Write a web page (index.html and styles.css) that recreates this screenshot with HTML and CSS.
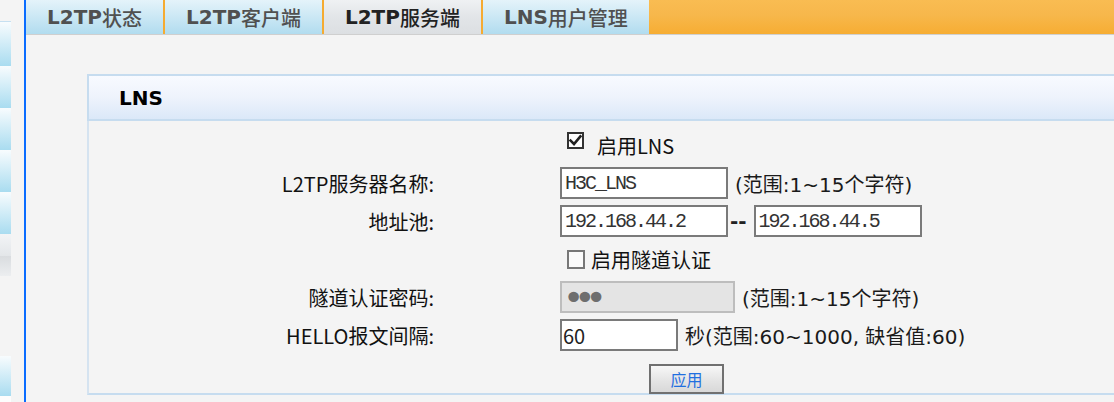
FILE: index.html
```html
<!DOCTYPE html>
<html lang="zh-CN">
<head>
<meta charset="utf-8">
<title>L2TP服务端</title>
<link rel="stylesheet" href="styles.css">
</head>
<body>
<div class="app">
  <aside class="sidebar">
    <div class="side-item first"></div>
    <div class="side-item"></div>
    <div class="side-item"></div>
    <div class="side-item"></div>
    <div class="side-item"></div>
    <div class="side-item grey-a"></div>
    <div class="side-item grey-b"></div>
    <div class="side-gap"></div>
    <div class="side-item last"></div>
  </aside>
  <main class="main">
    <nav class="tabs">
      <a class="tab">L2TP<span class="cjk">状态</span></a>
      <a class="tab">L2TP<span class="cjk">客户端</span></a>
      <a class="tab active">L2TP<span class="cjk">服务端</span></a>
      <a class="tab">LNS<span class="cjk">用户管理</span></a>
    </nav>
    <section class="panel">
      <header class="panel-head">LNS</header>
      <form class="panel-body">
        <div class="form-grid">
          <div class="lbl"></div>
          <div class="ctrl check-cell">
            <svg class="box box-on" width="17" height="17" viewBox="0 0 17 17" aria-hidden="true">
              <rect x="1" y="1" width="15" height="15" fill="#fff" stroke="#333" stroke-width="2"/>
              <path d="M3.6 8.6 L7 12 L13.4 4.4" fill="none" stroke="#222" stroke-width="2.6" stroke-linecap="square"/>
            </svg>
            <span class="check-text wide">启用LNS</span>
          </div>

          <label class="lbl">L2TP服务器名称:</label>
          <div class="ctrl">
            <input class="txt mono" type="text" value="H3C_LNS">
            <span class="note">(范围:1~15个字符)</span>
          </div>

          <label class="lbl">地址池:</label>
          <div class="ctrl">
            <input class="txt mono" type="text" value="192.168.44.2">
            <span class="dash">--</span>
            <input class="txt mono" type="text" value="192.168.44.5">
          </div>

          <div class="lbl"></div>
          <div class="ctrl check-cell">
            <svg class="box" width="18" height="19" viewBox="0 0 18 19" aria-hidden="true">
              <rect x="1" y="1" width="16" height="17" fill="#fafafa" stroke="#777" stroke-width="2"/>
            </svg>
            <span class="check-text">启用隧道认证</span>
          </div>

          <label class="lbl">隧道认证密码:</label>
          <div class="ctrl">
            <input class="txt pwd" type="password" value="abc" disabled>
            <span class="note">(范围:1~15个字符)</span>
          </div>

          <label class="lbl">HELLO报文间隔:</label>
          <div class="ctrl">
            <input class="txt short" type="text" value="60">
            <span class="note">秒(范围:60~1000, 缺省值:60)</span>
          </div>

          <div class="lbl"></div>
          <div class="ctrl action-cell">
            <button class="btn" type="button">应用</button>
          </div>
        </div>
      </form>
    </section>
  </main>
</div>
</body>
</html>
```

FILE: styles.css
```css
html, body {
  margin: 0;
  padding: 0;
  height: 100%;
  background: #f4f4f4;
  overflow: hidden;
}

.app {
  display: flex;
  height: 402px;
  background: #f4f4f4;
}

/* left navigation strip (cut off) */
.sidebar {
  width: 11px;
  flex: none;
  display: flex;
  flex-direction: column;
  padding-top: 21px;
}
.side-item {
  height: 42px;
  flex: none;
  background: linear-gradient(#f8fcfe, #a9dcf0);
}
.side-item.first {
  height: 44px;
  border-top: 1px solid #c6e0f1;
}
.side-item.grey-a {
  height: 22px;
  background: linear-gradient(#f2f4f6, #e3e6e9);
}
.side-item.grey-b {
  height: 20px;
  background: linear-gradient(#d9dcdf, #eceef0);
}
.side-gap {
  height: 80px;
  flex: none;
}
.side-item.last {
  height: 40px;
  border-bottom: 6px solid #fdfdfd;
}

.main {
  flex: 1;
  margin-left: 13px;
  border-left: 2px solid #0a6cff;
  overflow: hidden;
  min-width: 0;
}

/* tabs */
.tabs {
  display: flex;
  height: 34px;
  border-bottom: 1px solid #cfcfcf;
  background: linear-gradient(#f9bc52, #f7b74b 45%, #f6ad33);
}
.tab {
  display: flex;
  align-items: center;
  padding: 0 21px;
  height: 34px;
  background: linear-gradient(#e4f3fa, #b1dcef);
  color: #505050;
  font: 700 20px "DejaVu Sans", "Noto Sans CJK SC", sans-serif;
  border-left: 2px solid #f5ab32;
  white-space: nowrap;
  cursor: pointer;
}
.tab:first-child {
  border-left: none;
}
.tab .cjk {
  font-weight: 500;
}
.tab.active {
  background: linear-gradient(#eff1f3, #e2e5e8 50%, #dcdfe2);
  color: #222;
}

/* panel */
.panel {
  margin: 39px 0 0 61px;
  width: 1100px;
}
.panel-head {
  height: 43px;
  display: flex;
  align-items: center;
  padding-left: 30px;
  border: 2px solid #c6dcef;
  background: linear-gradient(#f8faff, #eef3fc 50%, #dbe8f8);
  font: 700 20px "DejaVu Sans", sans-serif;
  color: #000;
}
.panel-body {
  margin: 0;
  height: 274px;
  box-sizing: border-box;
  padding-top: 5px;
  border-left: 2px solid #d5e3f0;
  border-bottom: 2px solid #c6dcef;
}

.form-grid {
  display: grid;
  grid-template-columns: 345px 1fr;
  grid-template-rows: repeat(6, 38px) 40px;
  column-gap: 126px;
}
.lbl {
  display: flex;
  align-items: center;
  justify-content: flex-end;
  font: 20px "Noto Sans CJK SC", sans-serif;
  color: #111;
  white-space: nowrap;
}
.ctrl {
  display: flex;
  align-items: center;
  white-space: nowrap;
}

.check-cell {
  padding-left: 7px;
}
.box {
  flex: none;
}
.box-on {
  margin-bottom: 9px;
}
.check-text {
  margin-left: 6px;
  font: 20px "Noto Sans CJK SC", sans-serif;
  color: #111;
}
.check-text.wide {
  margin-left: 13px;
}

.txt {
  box-sizing: border-box;
  height: 32px;
  width: 168px;
  margin: 0;
  padding: 0 2px;
  border: 2px solid #7a7a7a;
  border-radius: 0;
  background: #fff;
  color: #222;
  outline: none;
  font: 20px "Noto Sans CJK SC", sans-serif;
}
.txt.mono {
  font: 20px "Liberation Mono", monospace;
  letter-spacing: -2px;
  padding-left: 3px;
  color: #333;
}
.txt.pwd {
  width: 175px;
  background: #e4e4e4;
  border-color: #bdbdbd;
  color: #6e6e6e;
  font: 36px/28px "DejaVu Sans", sans-serif;
  letter-spacing: -10px;
  padding: 0 0 0 1px;
}
.txt.short {
  width: 118px;
  padding-left: 1px;
}

.dash {
  margin: 0 7px 0 2px;
  font: 700 20px "DejaVu Sans", sans-serif;
  color: #222;
}
.note {
  margin-left: 7px;
  font: 20px "DejaVu Sans", "Noto Sans CJK SC", sans-serif;
  color: #1a1a1a;
}

.action-cell {
  align-items: flex-end;
  padding-left: 89px;
}
.btn {
  width: 75px;
  height: 30px;
  margin: 0;
  padding: 0;
  border: 2px solid #707070;
  border-radius: 0;
  background: linear-gradient(#f7f7f7, #e6e6e6 50%, #d8d8d8);
  color: #1f6fe0;
  font: 16px "Noto Sans CJK SC", sans-serif;
  cursor: pointer;
}
```
